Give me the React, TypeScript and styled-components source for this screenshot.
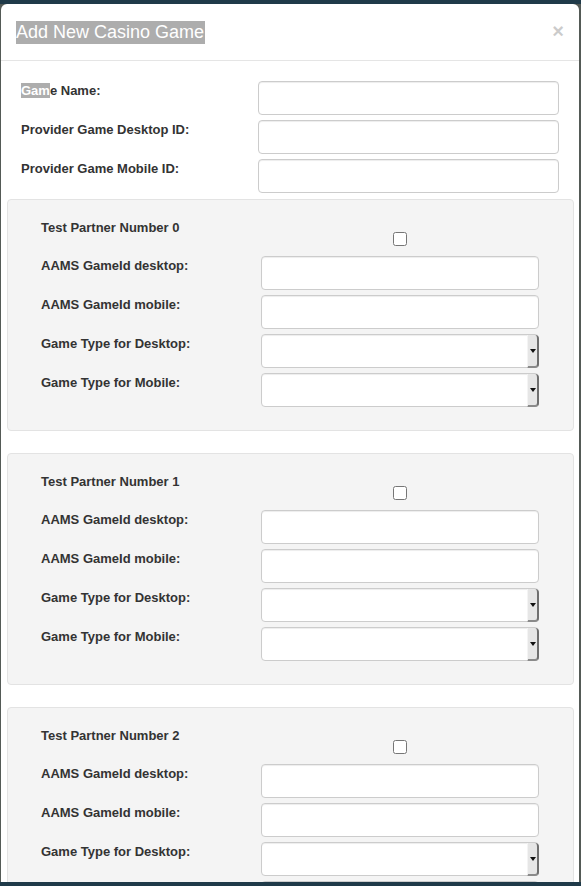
import React from "react";
import styled, { createGlobalStyle } from "styled-components";

const Global = createGlobalStyle`
  html, body { margin: 0; padding: 0; overflow: hidden; }
  body {
    background: linear-gradient(#1f3a49 0, #1f3a49 4px, #545a56 4px);
    font-family: "Liberation Sans", Arial, Helvetica, sans-serif;
    font-size: 13px;
    color: #333;
  }
`;

const Backdrop = styled.div`
  padding: 4px 2px 0 1px;
  height: 882px;
  box-sizing: border-box;
`;

const Modal = styled.div`
  background: #fff;
  border-radius: 6px 6px 0 0;
  width: 578px;
  min-height: 900px;
`;

const Header = styled.div`
  display: flex;
  align-items: center;
  justify-content: space-between;
  padding: 15px 15px 15px 15px;
  height: 26px;
  border-bottom: 1px solid #e5e5e5;
`;

const Title = styled.h4`
  margin: 0;
  font-size: 18px;
  font-weight: normal;
  line-height: 23px;
  color: #fff;
  background: #adadad;
  padding-right: 1px;
`;

const Close = styled.span`
  font-size: 20px;
  font-weight: bold;
  line-height: 1;
  color: #000;
  opacity: 0.2;
  margin-right: 0;
  margin-top: -2px;
`;

const Body = styled.div`
  padding: 20px;
  display: flex;
  flex-direction: column;
`;

const Row = styled.div<{ $label: number; $h?: number }>`
  display: grid;
  grid-template-columns: ${(p) => p.$label}px 1fr;
  margin-bottom: 5px;
  ${(p) => (p.$h ? `height: ${p.$h}px;` : "")}
`;

const Label = styled.label`
  font-weight: bold;
  font-size: 13px;
  line-height: 18px;
  padding-top: 1px;
  color: #333;
`;

const Sel = styled.span`
  background: #adadad;
  color: #fff;
`;

const Input = styled.input`
  box-sizing: border-box;
  height: 34px;
  width: 100%;
  margin: 0;
  border: 1px solid #ccc;
  border-radius: 4px;
  background: #fff;
  box-shadow: inset 0 1px 1px rgba(0, 0, 0, 0.075);
  outline: none;
`;

const SelectWrap = styled.div`
  position: relative;
  height: 34px;
`;

const Select = styled.select`
  appearance: none;
  box-sizing: border-box;
  height: 34px;
  width: 100%;
  margin: 0;
  border: 1px solid #ccc;
  border-radius: 4px;
  background: #fff;
  box-shadow: inset 0 1px 1px rgba(0, 0, 0, 0.075);
  outline: none;
`;

const Arrow = styled.span`
  position: absolute;
  top: 1px;
  bottom: 0;
  right: 0;
  width: 12px;
  box-sizing: border-box;
  background: #e6e6e6;
  border-right: 2px solid #6f6f6f;
  border-bottom: 2px solid #8a8a8a;
  border-left: 1px solid #f4f4f4;
  border-radius: 0 4px 4px 0;
  display: flex;
  align-items: center;
  justify-content: center;
  &::after {
    content: "";
    border-left: 3px solid transparent;
    border-right: 3px solid transparent;
    border-top: 4px solid #111;
    margin-top: 1px;
  }
`;

const Panel = styled.div`
  margin: 1px -15px 21px -14px;
  background: #f4f4f4;
  border: 1px solid #e3e3e3;
  border-radius: 4px;
  padding: 18px 34px 18px 33px;
  display: flex;
  flex-direction: column;
`;

const CheckCell = styled.div`
  display: flex;
  justify-content: center;
  padding-top: 14px;
`;

const Check = styled.input`
  width: 14px;
  height: 14px;
  margin: 0;
`;

const SelectField = () => (
  <SelectWrap>
    <Select defaultValue="">
      <option value=""></option>
    </Select>
    <Arrow />
  </SelectWrap>
);

const PartnerPanel = ({ n }: { n: number }) => (
  <Panel>
    <Row $label={220} $h={33}>
      <Label>Test Partner Number {n}</Label>
      <CheckCell>
        <Check type="checkbox" />
      </CheckCell>
    </Row>
    <Row $label={220}>
      <Label>AAMS GameId desktop:</Label>
      <Input />
    </Row>
    <Row $label={220}>
      <Label>AAMS GameId mobile:</Label>
      <Input />
    </Row>
    <Row $label={220}>
      <Label>Game Type for Desktop:</Label>
      <SelectField />
    </Row>
    <Row $label={220}>
      <Label>Game Type for Mobile:</Label>
      <SelectField />
    </Row>
  </Panel>
);

export default function App() {
  return (
    <>
      <Global />
      <Backdrop>
        <Modal>
          <Header>
            <Title>Add New Casino Game</Title>
            <Close>×</Close>
          </Header>
          <Body>
            <Row $label={237}>
              <Label>
                <Sel>Gam</Sel>e Name:
              </Label>
              <Input />
            </Row>
            <Row $label={237}>
              <Label>Provider Game Desktop ID:</Label>
              <Input />
            </Row>
            <Row $label={237}>
              <Label>Provider Game Mobile ID:</Label>
              <Input />
            </Row>
            {[0, 1, 2].map((n) => (
              <PartnerPanel key={n} n={n} />
            ))}
          </Body>
        </Modal>
      </Backdrop>
    </>
  );
}
